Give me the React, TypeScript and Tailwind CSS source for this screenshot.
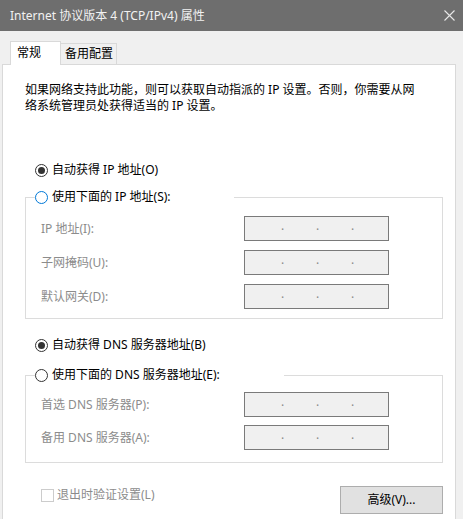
import type { ReactNode } from "react";

const font = "font-['Noto_Sans','Noto_Sans_CJK_SC',sans-serif]";

function Radio({ checked, focus }: { checked?: boolean; focus?: boolean }) {
  return (
    <span
      className={`flex h-[13px] w-[13px] shrink-0 items-center justify-center rounded-full border bg-white ${
        focus ? "border-[#0078d7]" : "border-[#333333]"
      }`}
    >
      {checked && <span className="h-[7px] w-[7px] rounded-full bg-[#333333]" />}
    </span>
  );
}

function RadioLabel({ children, checked, focus }: { children: ReactNode; checked?: boolean; focus?: boolean }) {
  return (
    <span className="flex h-[16px] items-center gap-[4px] text-[12px] leading-[16px] text-black">
      <Radio checked={checked} focus={focus} />
      <span>{children}</span>
    </span>
  );
}

function IpBox() {
  return (
    <div className="flex h-[25px] w-[145px] items-center border border-[#7a7a7a] bg-[#f0f0f0] pl-[36px] text-[12px] leading-[12px] text-[#8a8a8a]">
      <span className="-mt-[6px] w-[35px]">.</span>
      <span className="-mt-[6px] w-[35px]">.</span>
      <span className="-mt-[6px] w-[35px]">.</span>
    </div>
  );
}

function Field({ label }: { label: string }) {
  return (
    <div className="flex items-center">
      <span className="w-[203px] text-[12px] leading-[16px] text-[#8c8c8c]">{label}</span>
      <IpBox />
    </div>
  );
}

export default function App() {
  return (
    <div className={`flex h-[519px] w-[463px] flex-col overflow-hidden bg-[#f0f0f0] ${font}`}>
      {/* title bar */}
      <div className="flex h-[31px] shrink-0 items-center justify-between bg-[#6e6e6e] pl-[10px] pr-[8px]">
        <span className="text-[12px] leading-[16px] text-[#f2f2f2]">Internet 协议版本 4 (TCP/IPv4) 属性</span>
        <svg width="11" height="11" viewBox="0 0 11 11">
          <path d="M0.5 0.5 L10.5 10.5 M10.5 0.5 L0.5 10.5" stroke="#e8e8e8" strokeWidth="1.1" fill="none" />
        </svg>
      </div>

      <div className="mt-[10px] flex flex-1 flex-col pl-[2px] pr-[7px]">
        {/* tabs */}
        <div className="flex items-end pl-[8px]">
          <div className="relative z-10 -mb-px flex h-[24px] w-[51px] items-start border-x border-t border-[#d9d9d9] bg-white pl-[6px] pt-[3px] text-[12px] leading-[16px] text-black">
            常规
          </div>
          <div className="flex h-[21px] w-[56px] items-start border-r border-t border-[#d9d9d9] bg-[#f0f0f0] pl-[4px] pt-[2px] text-[12px] leading-[16px] text-black">
            备用配置
          </div>
        </div>

        {/* panel */}
        <div className="h-[480px] shrink-0 border border-[#d9d9d9] bg-white pl-[22px] pr-[12px]">
          <p className="pt-[17px] text-[12px] leading-[16px] text-black">
            如果网络支持此功能，则可以获取自动指派的 IP 设置。否则，你需要从网
            <br />
            络系统管理员处获得适当的 IP 设置。
          </p>

          <div className="mt-[48px] pl-[10px]">
            <RadioLabel checked>自动获得 IP 地址(O)</RadioLabel>
          </div>

          <fieldset className="mt-[11px] border border-[#dcdcdc] pb-[9px]">
            <legend className="ml-[9px] w-[199px]">
              <RadioLabel focus>使用下面的 IP 地址(S):</RadioLabel>
            </legend>
            <div className="mt-[11px] flex flex-col gap-[9px] pl-[15px]">
              <Field label="IP 地址(I):" />
              <Field label="子网掩码(U):" />
              <Field label="默认网关(D):" />
            </div>
          </fieldset>

          <div className="mt-[18px] pl-[10px]">
            <RadioLabel checked>自动获得 DNS 服务器地址(B)</RadioLabel>
          </div>

          <fieldset className="mt-[14px] border border-[#dcdcdc] pb-[12px]">
            <legend className="ml-[9px] w-[249px]">
              <RadioLabel>使用下面的 DNS 服务器地址(E):</RadioLabel>
            </legend>
            <div className="mt-[9px] flex flex-col gap-[8px] pl-[15px]">
              <Field label="首选 DNS 服务器(P):" />
              <Field label="备用 DNS 服务器(A):" />
            </div>
          </fieldset>

          <div className="mt-[23px] flex items-start justify-between">
            <span className="ml-[16px] mt-[1px] flex items-center gap-[3px] text-[12px] leading-[16px] text-[#8c8c8c]">
              <span className="h-[13px] w-[13px] border border-[#cccccc] bg-white" />
              退出时验证设置(L)
            </span>
            <button className="flex h-[28px] w-[103px] items-center justify-center border border-[#adadad] bg-[#e1e1e1] text-[12px] leading-[16px] text-black">
              高级(V)...
            </button>
          </div>
        </div>
      </div>
    </div>
  );
}
